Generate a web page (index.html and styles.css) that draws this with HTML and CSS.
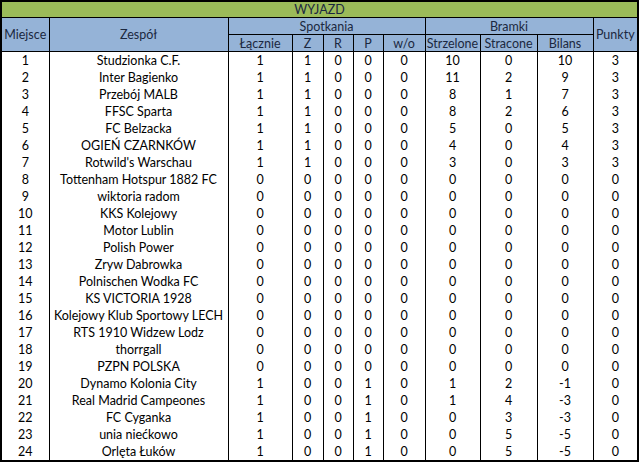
FILE: index.html
```html
<!DOCTYPE html>
<html lang="pl">
<head>
<meta charset="utf-8">
<title>Wyjazd</title>
<link rel="stylesheet" href="styles.css">
</head>
<body>
<table class="tbl">
  <colgroup>
    <col class="c-pos"><col class="c-team"><col class="c-tot"><col class="c-z"><col class="c-r"><col class="c-p"><col class="c-wo"><col class="c-str"><col class="c-stc"><col class="c-bil"><col class="c-pts">
  </colgroup>
  <thead>
    <tr class="title"><th colspan="11">WYJAZD</th></tr>
    <tr class="grp"><th rowspan="2">Miejsce</th><th rowspan="2">Zespół</th><th colspan="5">Spotkania</th><th colspan="3">Bramki</th><th rowspan="2">Punkty</th></tr>
    <tr class="sub"><th>Łącznie</th><th>Z</th><th>R</th><th>P</th><th>w/o</th><th>Strzelone</th><th>Stracone</th><th>Bilans</th></tr>
  </thead>
  <tbody>
    <tr><td>1</td><td>Studzionka C.F.</td><td>1</td><td>1</td><td>0</td><td>0</td><td>0</td><td>10</td><td>0</td><td>10</td><td>3</td></tr>
    <tr><td>2</td><td>Inter Bagienko</td><td>1</td><td>1</td><td>0</td><td>0</td><td>0</td><td>11</td><td>2</td><td>9</td><td>3</td></tr>
    <tr><td>3</td><td>Przebój MALB</td><td>1</td><td>1</td><td>0</td><td>0</td><td>0</td><td>8</td><td>1</td><td>7</td><td>3</td></tr>
    <tr><td>4</td><td>FFSC Sparta</td><td>1</td><td>1</td><td>0</td><td>0</td><td>0</td><td>8</td><td>2</td><td>6</td><td>3</td></tr>
    <tr><td>5</td><td>FC Belzacka</td><td>1</td><td>1</td><td>0</td><td>0</td><td>0</td><td>5</td><td>0</td><td>5</td><td>3</td></tr>
    <tr><td>6</td><td>OGIEŃ CZARNKÓW</td><td>1</td><td>1</td><td>0</td><td>0</td><td>0</td><td>4</td><td>0</td><td>4</td><td>3</td></tr>
    <tr><td>7</td><td>Rotwild's Warschau</td><td>1</td><td>1</td><td>0</td><td>0</td><td>0</td><td>3</td><td>0</td><td>3</td><td>3</td></tr>
    <tr><td>8</td><td>Tottenham Hotspur 1882 FC</td><td>0</td><td>0</td><td>0</td><td>0</td><td>0</td><td>0</td><td>0</td><td>0</td><td>0</td></tr>
    <tr><td>9</td><td>wiktoria radom</td><td>0</td><td>0</td><td>0</td><td>0</td><td>0</td><td>0</td><td>0</td><td>0</td><td>0</td></tr>
    <tr><td>10</td><td>KKS Kolejowy</td><td>0</td><td>0</td><td>0</td><td>0</td><td>0</td><td>0</td><td>0</td><td>0</td><td>0</td></tr>
    <tr><td>11</td><td>Motor Lublin</td><td>0</td><td>0</td><td>0</td><td>0</td><td>0</td><td>0</td><td>0</td><td>0</td><td>0</td></tr>
    <tr><td>12</td><td>Polish Power</td><td>0</td><td>0</td><td>0</td><td>0</td><td>0</td><td>0</td><td>0</td><td>0</td><td>0</td></tr>
    <tr><td>13</td><td>Zryw Dabrowka</td><td>0</td><td>0</td><td>0</td><td>0</td><td>0</td><td>0</td><td>0</td><td>0</td><td>0</td></tr>
    <tr><td>14</td><td>Polnischen Wodka FC</td><td>0</td><td>0</td><td>0</td><td>0</td><td>0</td><td>0</td><td>0</td><td>0</td><td>0</td></tr>
    <tr><td>15</td><td>KS VICTORIA 1928</td><td>0</td><td>0</td><td>0</td><td>0</td><td>0</td><td>0</td><td>0</td><td>0</td><td>0</td></tr>
    <tr><td>16</td><td>Kolejowy Klub Sportowy LECH</td><td>0</td><td>0</td><td>0</td><td>0</td><td>0</td><td>0</td><td>0</td><td>0</td><td>0</td></tr>
    <tr><td>17</td><td>RTS 1910 Widzew Lodz</td><td>0</td><td>0</td><td>0</td><td>0</td><td>0</td><td>0</td><td>0</td><td>0</td><td>0</td></tr>
    <tr><td>18</td><td>thorrgall</td><td>0</td><td>0</td><td>0</td><td>0</td><td>0</td><td>0</td><td>0</td><td>0</td><td>0</td></tr>
    <tr><td>19</td><td>PZPN POLSKA</td><td>0</td><td>0</td><td>0</td><td>0</td><td>0</td><td>0</td><td>0</td><td>0</td><td>0</td></tr>
    <tr><td>20</td><td>Dynamo Kolonia City</td><td>1</td><td>0</td><td>0</td><td>1</td><td>0</td><td>1</td><td>2</td><td>-1</td><td>0</td></tr>
    <tr><td>21</td><td>Real Madrid Campeones</td><td>1</td><td>0</td><td>0</td><td>1</td><td>0</td><td>1</td><td>4</td><td>-3</td><td>0</td></tr>
    <tr><td>22</td><td>FC Cyganka</td><td>1</td><td>0</td><td>0</td><td>1</td><td>0</td><td>0</td><td>3</td><td>-3</td><td>0</td></tr>
    <tr><td>23</td><td>unia niećkowo</td><td>1</td><td>0</td><td>0</td><td>1</td><td>0</td><td>0</td><td>5</td><td>-5</td><td>0</td></tr>
    <tr><td>24</td><td>Orlęta Łuków</td><td>1</td><td>0</td><td>0</td><td>1</td><td>0</td><td>0</td><td>5</td><td>-5</td><td>0</td></tr>
  </tbody>
</table>
</body>
</html>
```
FILE: styles.css
```css
html, body {
  margin: 0;
  padding: 0;
  background: #ffffff;
}

.tbl {
  border-collapse: collapse;
  table-layout: fixed;
  width: 639px;
  border: 2px solid #000;
  font-family: Lato, "Noto Sans", sans-serif;
  font-size: 12.5px;
  color: #000;
}

.c-pos { width: 48px; }
.c-team { width: 179px; }
.c-tot { width: 64px; }
.c-z { width: 31px; }
.c-r { width: 30px; }
.c-p { width: 30px; }
.c-wo { width: 42px; }
.c-str { width: 55px; }
.c-stc { width: 57px; }
.c-bil { width: 56px; }
.c-pts { width: 45px; }

.tbl th {
  border: 1px solid #000;
  padding: 0;
  font-weight: normal;
  color: #1b2840;
  text-align: center;
  white-space: nowrap;
  overflow: hidden;
  line-height: 15px;
}

.title th {
  background: #9bbb59;
  height: 15px;
}

.grp th,
.sub th {
  background: #95b3d7;
}

.grp th { height: 16px; }
.sub th { height: 16px; }

.tbl td {
  border-left: 1px solid #000;
  border-right: 1px solid #000;
  padding: 0;
  height: 17px;
  line-height: 17px;
  text-align: center;
  white-space: nowrap;
  overflow: hidden;
}
```
